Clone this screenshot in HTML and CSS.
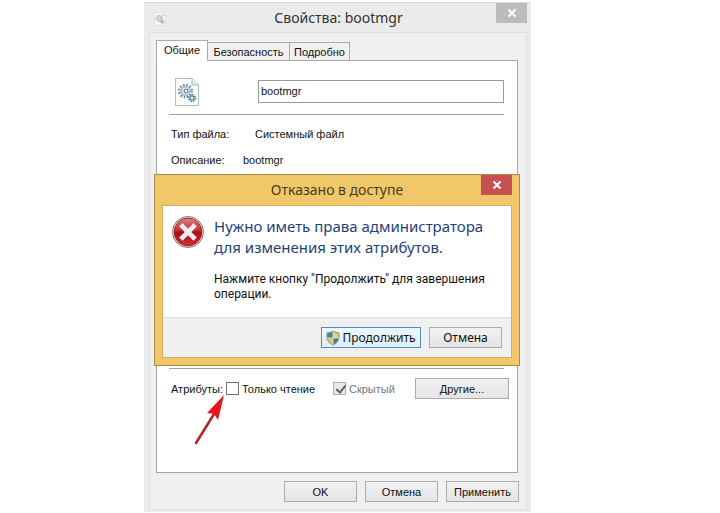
FILE: index.html
```html
<!DOCTYPE html>
<html lang="ru">
<head>
  <meta charset="UTF-8">
  <title>Свойства: bootmgr</title>
  <link rel="stylesheet" href="styles.css">
</head>
<body>

  <main class="window">
    <header class="titlebar">
      <svg class="title-icon" viewBox="0 0 24 28" aria-hidden="true">
        <use href="#file-icon"/>
      </svg>
      <h1>Свойства: bootmgr</h1>
      <button class="close" aria-label="Закрыть">
        <svg viewBox="0 0 10 10"><path d="M1.5 1.5L8.5 8.5M8.5 1.5L1.5 8.5"/></svg>
      </button>
    </header>

    <div class="content">
      <nav class="tabs">
        <button class="tab active">Общие</button>
        <button class="tab">Безопасность</button>
        <button class="tab">Подробно</button>
      </nav>

      <section class="panel">
        <div class="file-row">
          <svg class="file-icon" viewBox="0 0 24 28" aria-hidden="true">
            <g id="file-icon">
              <path d="M.5.5H17L23.5 7V27.5H.5Z" fill="#fbfcfc" stroke="#b5b9bc"/>
              <path d="M17 .5V7H23.5" fill="#e6eaec" stroke="#b5b9bc"/>
              <circle cx="10.5" cy="13" r="6.2" fill="none" stroke="#6d8796" stroke-width="2.4" stroke-dasharray="1.6 1.65"/>
              <circle cx="10.5" cy="13" r="4.4" fill="#dbe9f0" stroke="#a3bfce" stroke-width="1.8"/>
              <circle cx="11" cy="13" r="1.9" fill="#fff" stroke="#4f7084"/>
              <circle cx="17" cy="20" r="3.2" fill="none" stroke="#57788b" stroke-width="2" stroke-dasharray="1.3 1.21"/>
              <circle cx="17" cy="20" r="2" fill="#e5f0f5" stroke="#7092a5" stroke-width="1.4"/>
            </g>
          </svg>
          <input class="file-name" type="text" value="bootmgr" aria-label="Имя файла">
        </div>

        <hr>

        <dl class="details">
          <div class="detail wide"><dt>Тип файла:</dt><dd>Системный файл</dd></div>
          <div class="detail"><dt>Описание:</dt><dd>bootmgr</dd></div>
        </dl>

        <hr>

        <div class="attributes">
          <span class="attr-title">Атрибуты:</span>
          <label class="check"><input type="checkbox">Только чтение</label>
          <label class="check disabled"><input type="checkbox" checked disabled>Скрытый</label>
          <button class="btn other">Другие...</button>
          <svg class="arrow" viewBox="0 0 32 52" aria-hidden="true">
            <path d="M2 49L20 20" stroke="#b5202a" stroke-width="2.5" stroke-linecap="round"/>
            <path d="M30 1L13 19L20 20L24 26Z" fill="#e8141c"/>
          </svg>
        </div>
      </section>

      <footer class="actions">
        <button class="btn">OK</button>
        <button class="btn">Отмена</button>
        <button class="btn">Применить</button>
      </footer>
    </div>

    <section class="dialog" role="alertdialog" aria-labelledby="dialog-title">
      <header class="dialog-title">
        <h2 id="dialog-title">Отказано в доступе</h2>
        <button class="close red" aria-label="Закрыть">
          <svg viewBox="0 0 10 10"><path d="M1.5 1.5L8.5 8.5M8.5 1.5L1.5 8.5"/></svg>
        </button>
      </header>
      <div class="dialog-body">
        <div class="message">
          <svg class="error-icon" viewBox="0 0 32 32" aria-hidden="true">
            <defs>
              <linearGradient id="red" x1="0" y1="0" x2="0" y2="1">
                <stop offset="0" stop-color="#d98787"/>
                <stop offset=".45" stop-color="#bd3035"/>
                <stop offset=".5" stop-color="#a70d15"/>
                <stop offset="1" stop-color="#cf3036"/>
              </linearGradient>
            </defs>
            <circle cx="16" cy="16" r="15.5" fill="#e4dada" stroke="#a06c6c"/>
            <circle cx="16" cy="16" r="13.8" fill="url(#red)" stroke="#94282c"/>
            <path d="M10.5 10.5L21.5 21.5M21.5 10.5L10.5 21.5" stroke="#f1eeee" stroke-width="4.6" stroke-linecap="square"/>
          </svg>
          <div>
            <h3>Нужно иметь права администратора<br>для изменения этих атрибутов.</h3>
            <p>Нажмите кнопку "Продолжить" для завершения<br>операции.</p>
          </div>
        </div>
        <footer class="dialog-actions">
          <button class="btn primary">
            <svg class="shield" viewBox="0 0 14 16" aria-hidden="true">
              <path d="M7 1Q4 3 1 3V7Q1 12.5 7 15Z" fill="#3f87bd"/>
              <path d="M7 1Q10 3 13 3V7Q13 12.5 7 15Z" fill="#e9d24c"/>
              <path d="M7 8H13Q12 13 7 15Z" fill="#3c7fb6"/>
              <path d="M7 8H1Q2 13 7 15Z" fill="#dfca48"/>
              <path d="M7 1Q4 3 1 3V7Q1 12.5 7 15Q13 12.5 13 7V3Q10 3 7 1Z" fill="none" stroke="#82958b"/>
              <path d="M7 1V15M1 8H13" stroke="#d9e8cf" stroke-width=".8"/>
            </svg>
            Продолжить
          </button>
          <button class="btn">Отмена</button>
        </footer>
      </div>
    </section>
  </main>

</body>
</html>
```

FILE: styles.css
```css
* {
  box-sizing: border-box;
}

body {
  margin: 0;
  padding-top: 2px;
  background: #fff;
  color: #111;
  font: 11px/16px "Liberation Sans", Arial, sans-serif;
}

h1, h2, h3, p, dl, dd {
  margin: 0;
  font-weight: normal;
}

button, input {
  margin: 0;
  padding: 0;
  color: inherit;
  font: inherit;
}

.window {
  position: relative;
  width: 54%;
  max-width: 387px;
  margin-left: 20%;
  padding: 0 4px 2px 5px;
  background: #ebebeb;
  border-top: 1px solid #d9d9d9;
}

.titlebar {
  display: flex;
  align-items: flex-start;
  height: 29px;
}

.title-icon {
  width: 12px;
  height: 14px;
  margin: 9px 0 0 5px;
  opacity: 0.7;
}

h1, h2 {
  flex: 1;
  text-align: center;
  font: 14px/20px "Noto Sans", sans-serif;
}

h1 {
  padding: 5px 0 0 15px;
  color: #333;
}

.close {
  display: flex;
  align-items: center;
  justify-content: center;
  width: 31px;
  height: 20px;
  border: 0;
  background: #bcbcbc;
}

.close svg {
  width: 10px;
  height: 10px;
  stroke: #fff;
  stroke-width: 2;
}

.close.red {
  background: #c75050;
}

.content {
  padding: 7px 7px 7px 6px;
  background: #f0f0f0;
  border: 1px solid #dedede;
}

.tabs {
  display: flex;
  align-items: flex-end;
}

.tab {
  width: 60px;
  height: 18px;
  background: #f0f0f0;
  border: 1px solid #acacac;
  border-width: 1px 1px 0 0;
}

.tab:nth-child(2) {
  width: 82px;
}

.tab.active {
  position: relative;
  width: 52px;
  height: 21px;
  margin-bottom: -1px;
  padding-bottom: 2px;
  background: #fff;
  border-left-width: 1px;
}

.panel {
  height: 413px;
  margin-right: 1px;
  padding: 17px 13px 0 12px;
  background: #fff;
  border: 1px solid #a5a5a5;
}

.file-row {
  display: flex;
  align-items: flex-start;
  justify-content: space-between;
  padding-left: 6px;
}

.file-icon {
  width: 24px;
  height: 28px;
}

.file-name {
  width: 246px;
  height: 23px;
  margin-top: 2px;
  padding: 0 2px 2px;
  background: #fff;
  border: 1px solid #9a9a9a;
}

hr {
  margin: 8px 0 0;
  border: 0;
  border-top: 1px solid #a0a0a0;
}

.details {
  height: 245px;
  padding: 11px 2px 0;
}

.detail {
  display: flex;
  margin-bottom: 10px;
}

.detail dt {
  width: 72px;
}

.detail.wide dt {
  width: 84px;
}

.attributes {
  position: relative;
  display: flex;
  align-items: center;
  margin-right: -5px;
  padding: 9px 0 0 2px;
}

.attr-title {
  width: 55px;
}

.check {
  display: flex;
  align-items: center;
  gap: 3px;
  width: 107px;
  white-space: nowrap;
}

.check input {
  flex: none;
  width: 13px;
  height: 13px;
  appearance: none;
  background: #fff;
  border: 1px solid #707070;
}

.check.disabled {
  width: auto;
  color: #777;
}

.check.disabled input {
  background: #e8e8e8;
  border-color: #b0b0b0;
}

.check.disabled input::before {
  display: block;
  content: "";
  width: 4px;
  height: 8px;
  margin: 0 0 0 4px;
  border: solid #666;
  border-width: 0 2px 2px 0;
  transform: rotate(40deg);
}

.btn {
  width: 73px;
  height: 21px;
  background: linear-gradient(#f1f1f1, #e5e5e5);
  border: 1px solid #acacac;
}

.other {
  width: 94px;
  margin-left: auto;
}

/* pointer lying over the panel, tip at the first checkbox */
.arrow {
  position: absolute;
  top: 25px;
  left: 25px;
  width: 32px;
  height: 52px;
}

.actions {
  display: flex;
  justify-content: flex-end;
  gap: 8px;
  padding-top: 8px;
}

/* message box over the window */
.dialog {
  position: absolute;
  top: 171px;
  left: 10px;
  right: 11px;
  padding: 0 7px 7px;
  background: #f0c869;
  border: 1px solid #a88d50;
  font: 12px/15px "Noto Sans", sans-serif;
}

.dialog-title {
  display: flex;
  height: 30px;
}

.dialog-title h2 {
  padding: 5px 0 0 31px;
  color: #4b3c1c;
}

.dialog-body {
  background: #fff;
  border: 1px solid #d4af5b;
}

.message {
  display: flex;
  align-items: flex-start;
  gap: 10px;
  padding: 10px 9px 15px;
}

.error-icon {
  flex: none;
  width: 32px;
  height: 32px;
}

.message h3 {
  margin-bottom: 14px;
  color: #1f4278;
  font-size: 15px;
  line-height: 21px;
  white-space: nowrap;
}

.message p {
  font-family: Roboto, sans-serif;
  white-space: nowrap;
}

.dialog-actions {
  display: flex;
  justify-content: flex-end;
  gap: 8px;
  padding: 9px;
  background: #f0f0f0;
  border-top: 1px solid #dfdfdf;
}

.primary {
  display: flex;
  align-items: center;
  justify-content: center;
  gap: 2px;
  width: 100px;
  background: linear-gradient(#eef6fb, #e0eff9);
  border-color: #4c90c0;
}

.shield {
  width: 14px;
  height: 16px;
}
```
